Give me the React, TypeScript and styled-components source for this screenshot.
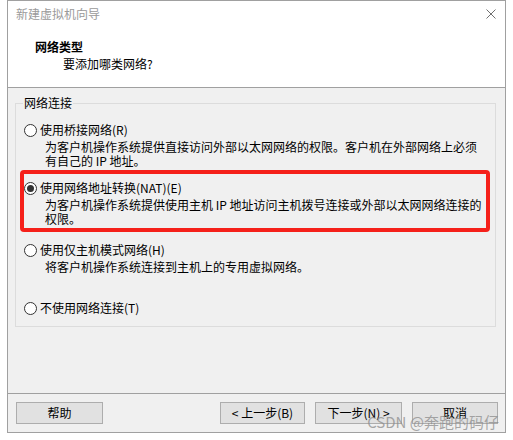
import React from 'react'
import styled, { createGlobalStyle } from 'styled-components'

const GlobalStyle = createGlobalStyle`
    body {
        margin: 0;
        background: #ffffff;
        font-family: "Noto Sans CJK SC", "Noto Sans", sans-serif;
        font-size: 12px;
        color: #000;
    }
`

interface OptionItem {
    label: string
    desc: string[]
    checked?: boolean
    gap: number
    highlight?: boolean
}

const options: OptionItem[] = [
    {
        label: '使用桥接网络(R)',
        desc: ['为客户机操作系统提供直接访问外部以太网网络的权限。客户机在外部网络上必须', '有自己的 IP 地址。'],
        gap: 11,
    },
    {
        label: '使用网络地址转换(NAT)(E)',
        desc: ['为客户机操作系统提供使用主机 IP 地址访问主机拨号连接或外部以太网网络连接的', '权限。'],
        checked: true,
        highlight: true,
        gap: 12,
    },
    {
        label: '使用仅主机模式网络(H)',
        desc: ['将客户机操作系统连接到主机上的专用虚拟网络。'],
        gap: 16,
    },
    {
        label: '不使用网络连接(T)',
        desc: [],
        gap: 12,
    },
]

const App = () => {
    return (
        <>
            <GlobalStyle />
            <Window>
                <Header>
                    <TitleBar>
                        <TitleText>新建虚拟机向导</TitleText>
                        <CloseIcon width="10" height="10" viewBox="0 0 10 10">
                            <path d="M0.5 0.5 L9.5 9.5 M9.5 0.5 L0.5 9.5" stroke="#707070" strokeWidth="1" fill="none" />
                        </CloseIcon>
                    </TitleBar>
                    <Heading>网络类型</Heading>
                    <SubHeading>要添加哪类网络?</SubHeading>
                </Header>
                <Body>
                    <GroupBox>
                        <Legend>网络连接</Legend>
                        {options.map(o => (
                            <Option key={o.label} $gap={o.gap} $highlight={o.highlight}>
                                <OptionRow>
                                    <Radio $checked={o.checked} />
                                    <OptionLabel>{o.label}</OptionLabel>
                                </OptionRow>
                                {o.desc.length > 0 && (
                                    <Desc>
                                        {o.desc.map(line => <div key={line}>{line}</div>)}
                                    </Desc>
                                )}
                            </Option>
                        ))}
                    </GroupBox>
                </Body>
                <Footer>
                    <Button $w={87}>帮助</Button>
                    <ButtonGroup>
                        <Button $w={85}>&lt; 上一步(B)</Button>
                        <Button $w={87}>下一步(N) &gt;</Button>
                        <Button $w={86}>取消</Button>
                    </ButtonGroup>
                </Footer>
                <Watermark>CSDN @奔跑的码仔</Watermark>
            </Window>
        </>
    )
}

const Window = styled.div`
    position: relative;
    margin-left: 7px;
    width: 499px;
    height: 433px;
    box-sizing: border-box;
    border: 1px solid #a0a0a0;
    background: #f0f0f0;
    display: flex;
    flex-direction: column;
`

const Header = styled.div`
    height: 87px;
    box-sizing: border-box;
    background: #ffffff;
    border-bottom: 1px solid #a0a0a0;
`

const TitleBar = styled.div`
    height: 26px;
    display: flex;
    align-items: center;
    justify-content: space-between;
    padding: 0 9px 0 8px;
`

const TitleText = styled.span`
    color: #9a9a9a;
    line-height: 16px;
`

const CloseIcon = styled.svg`
    display: block;
`

const Heading = styled.div`
    margin-top: 12px;
    padding-left: 27px;
    font-weight: bold;
    line-height: 16px;
`

const SubHeading = styled.div`
    margin-top: 1px;
    padding-left: 55px;
    line-height: 16px;
`

const Body = styled.div`
    height: 306px;
    box-sizing: border-box;
    border-bottom: 1px solid #a0a0a0;
    padding: 15px 0 0 7px;
`

const GroupBox = styled.div`
    width: 481px;
    box-sizing: border-box;
    border: 1px solid #dcdcdc;
    padding-bottom: 10px;
`

const Legend = styled.div`
    display: table;
    margin: -9px 0 0 7px;
    padding: 0 1px;
    background: #f0f0f0;
    line-height: 16px;
`

const Option = styled.div<{ $gap: number; $highlight?: boolean }>`
    position: relative;
    margin-top: ${p => p.$gap}px;

    ${p => p.$highlight && `
        &::after {
            content: '';
            position: absolute;
            top: -10px;
            bottom: -6px;
            left: 4px;
            right: 5px;
            border: 4px solid #f5201a;
            border-radius: 4px;
            pointer-events: none;
        }
    `}
`

const OptionRow = styled.div`
    display: flex;
    align-items: center;
    gap: 3px;
    height: 16px;
    padding-left: 8px;
`

const Radio = styled.span<{ $checked?: boolean }>`
    width: 13px;
    height: 13px;
    box-sizing: border-box;
    border-radius: 50%;
    border: 1px solid #333333;
    background: #ffffff;
    display: flex;
    align-items: center;
    justify-content: center;

    &::after {
        content: '';
        width: 7px;
        height: 7px;
        border-radius: 50%;
        background: ${p => (p.$checked ? '#333333' : 'transparent')};
    }
`

const OptionLabel = styled.span`
    line-height: 16px;
`

const Desc = styled.div`
    margin-top: 2px;
    padding-left: 29px;
    line-height: 14px;
    min-height: 28px;
    white-space: nowrap;
`

const Footer = styled.div`
    flex: 1;
    display: flex;
    justify-content: space-between;
    align-items: flex-start;
    padding: 8px 7px 0 8px;
`

const ButtonGroup = styled.div`
    display: flex;
    gap: 10px;
`

const Button = styled.button<{ $w: number }>`
    width: ${p => p.$w}px;
    height: 22px;
    box-sizing: border-box;
    border: 1px solid #adadad;
    background: #e1e1e1;
    font-family: "Noto Sans CJK SC", "Noto Sans", sans-serif;
    font-size: 12px;
    color: #000;
    padding: 0;
    line-height: 20px;
`

const Watermark = styled.div`
    position: absolute;
    right: 6px;
    bottom: 1px;
    font-size: 15px;
    line-height: 18px;
    color: rgba(140, 140, 140, 0.75);
    pointer-events: none;
    white-space: nowrap;
`

export default App
